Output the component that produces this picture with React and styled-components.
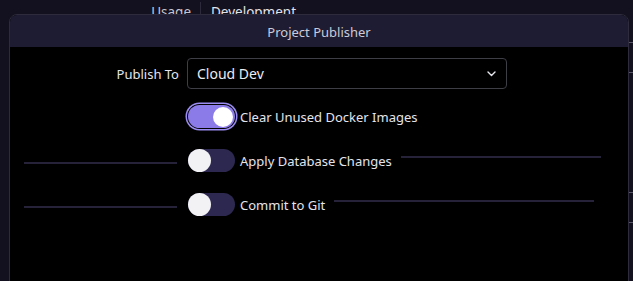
import React from 'react';
import styled, { createGlobalStyle } from 'styled-components';

const GlobalStyle = createGlobalStyle`
  html, body {
    margin: 0;
    padding: 0;
    background: #13111f;
    overflow: hidden;
  }
  body {
    font-family: "Noto Sans", "Open Sans", sans-serif;
    width: 633px;
    height: 281px;
  }
`;

const Page = styled.div`
  position: relative;
  width: 633px;
  height: 281px;
  overflow: hidden;
  background: #13111f;
`;

const InfoRow = styled.div`
  display: flex;
  align-items: flex-start;
  height: 20px;
  padding-top: 2px;
`;

const InfoLabel = styled.div`
  width: 201px;
  text-align: right;
  color: #c6c6d0;
  font-size: 13.5px;
  line-height: 20px;
  padding-right: 9px;
  box-sizing: border-box;
  border-right: 1px solid #2c2a3a;
`;

const InfoValue = styled.div`
  color: #e2e2ea;
  font-size: 13.5px;
  line-height: 20px;
  padding-left: 10px;
`;

const SideColumn = styled.div`
  display: flex;
  flex-direction: column;
  align-items: flex-end;
  padding-top: 20px;
`;

const SideCell = styled.div`
  width: 6px;
  height: ${({ $h }) => $h}px;
  border-top: 1px solid #5a5868;
  box-sizing: border-box;
`;

const Modal = styled.div`
  position: absolute;
  top: 14px;
  left: 9px;
  width: 620px;
  height: 300px;
  border: 1px solid #2e2c3c;
  border-radius: 8px;
  background: #000;
  overflow: hidden;
  box-sizing: border-box;
`;

const Header = styled.div`
  height: 31px;
  background: #1e1c32;
  display: flex;
  align-items: center;
  justify-content: center;
  color: #cbcbd8;
  font-size: 13px;
  padding-top: 1px;
`;

const Body = styled.div`
  display: flex;
  flex-direction: column;
  padding-top: 11px;
`;

const FormRow = styled.div`
  display: flex;
  align-items: center;
  height: 31px;
`;

const Slot = styled.div`
  width: 177px;
  flex-shrink: 0;
  display: flex;
  justify-content: flex-end;
  align-items: center;
`;

const FieldLabel = styled.label`
  color: #e4e4ec;
  font-size: 13px;
  padding-right: 8px;
`;

const Select = styled.div`
  width: 320px;
  height: 31px;
  box-sizing: border-box;
  border: 1px solid #3e3e46;
  border-radius: 4px;
  display: flex;
  align-items: center;
  justify-content: space-between;
  padding: 0 10px 0 9px;
  color: #ececf2;
  font-size: 14px;
`;

const ToggleList = styled.div`
  display: flex;
  flex-direction: column;
  gap: 21px;
  margin-top: 16px;
`;

const ToggleRow = styled.div`
  display: flex;
  align-items: center;
  height: 23px;
`;

const Rule = styled.div`
  height: 2px;
  background: #25223a;
`;

const LeftRule = styled(Rule)`
  width: 153px;
  margin: 4px 10px 0 14px;
`;

const RightRule = styled(Rule)`
  width: ${({ $w }) => $w}px;
  margin-left: 9px;
  margin-top: -8px;
`;

const Track = styled.div`
  position: relative;
  width: 47px;
  height: 23px;
  border-radius: 12px;
  flex-shrink: 0;
  margin-left: 1px;
  background: ${({ $on }) => ($on ? '#8b7be8' : '#2d2850')};
  box-shadow: ${({ $on }) => ($on ? '0 0 0 1px #000, 0 0 0 2.5px #9a8cf0' : 'none')};
`;

const Knob = styled.div`
  position: absolute;
  top: ${({ $on }) => ($on ? 1.5 : 0)}px;
  left: ${({ $on }) => ($on ? 25 : 0)}px;
  width: ${({ $on }) => ($on ? 20 : 23)}px;
  height: ${({ $on }) => ($on ? 20 : 23)}px;
  border-radius: 50%;
  background: ${({ $on }) => ($on ? '#ffffff' : '#f2f2f4')};
`;

const ToggleLabel = styled.span`
  color: #e4e4ec;
  font-size: 13px;
  margin-left: 5px;
  white-space: nowrap;
`;

const Chevron = () => (
  <svg width="9" height="6" viewBox="0 0 9 6" fill="none">
    <path d="M1 1l3.5 3.5L8 1" stroke="#e8e8f0" strokeWidth="1.4" strokeLinecap="round" strokeLinejoin="round" />
  </svg>
);

const toggles = [
  { label: 'Clear Unused Docker Images', on: true },
  { label: 'Apply Database Changes', on: false, rule: 200 },
  { label: 'Commit to Git', on: false, rule: 260 },
];

export default function App() {
  return (
    <Page>
      <GlobalStyle />
      <InfoRow>
        <InfoLabel>Usage</InfoLabel>
        <InfoValue>Development</InfoValue>
      </InfoRow>
      <SideColumn>
        <SideCell $h={30} />
        <SideCell $h={120} />
        <SideCell $h={30} />
        <SideCell $h={30} />
      </SideColumn>
      <Modal>
        <Header>Project Publisher</Header>
        <Body>
          <FormRow>
            <Slot>
              <FieldLabel>Publish To</FieldLabel>
            </Slot>
            <Select>
              <span>Cloud Dev</span>
              <Chevron />
            </Select>
          </FormRow>
          <ToggleList>
            {toggles.map((t) => (
              <ToggleRow key={t.label}>
                <Slot>{t.rule && <LeftRule />}</Slot>
                <Track $on={t.on}>
                  <Knob $on={t.on} />
                </Track>
                <ToggleLabel>{t.label}</ToggleLabel>
                {t.rule && <RightRule $w={t.rule} />}
              </ToggleRow>
            ))}
          </ToggleList>
        </Body>
      </Modal>
    </Page>
  );
}
